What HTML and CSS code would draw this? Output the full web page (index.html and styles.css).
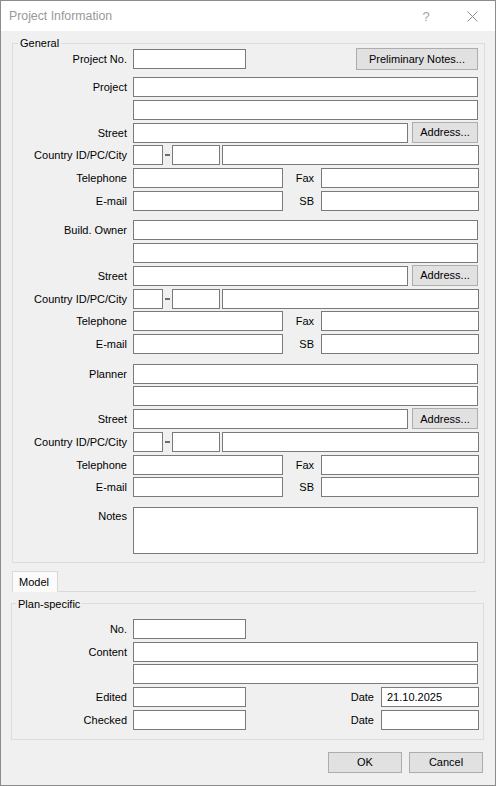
FILE: index.html
```html
<!DOCTYPE html>
<html lang="en">

<head>
    <meta charset="UTF-8">
    <meta name="viewport" content="width=device-width, initial-scale=1.0">
    <title>Project Information</title>
    <link rel="stylesheet" href="styles.css">
</head>

<body>
    <div class="dialog">
        <div class="titlebar">
            <span class="title">Project Information</span>
            <span class="tbtn help">?</span>
            <span class="tbtn close">
                <svg width="11" height="11" viewBox="0 0 11 11">
                    <path d="M0.5 0.5 L10.5 10.5 M10.5 0.5 L0.5 10.5" stroke="#8f8f8f" stroke-width="1" fill="none" />
                </svg>
            </span>
        </div>

        <div class="client">
            <fieldset class="group general">
                <legend>General</legend>
                <div class="rows">
                    <div class="row first">
                        <label class="lbl" for="projno">Project No.</label>
                        <input type="text" id="projno" class="short">
                        <button class="btn prelim">Preliminary Notes...</button>
                    </div>

                    <!-- project -->
                    <div class="row section full">
                        <label class="lbl">Project</label>
                        <input type="text" class="grow">
                    </div>
                    <div class="row full">
                        <span class="lbl"></span>
                        <input type="text" class="grow">
                    </div>
                    <div class="row full">
                        <label class="lbl">Street</label>
                        <input type="text" class="grow">
                        <button class="btn addr">Address...</button>
                    </div>
                    <div class="row">
                        <label class="lbl">Country ID/PC/City</label>
                        <input type="text" class="cid"><span class="dash"></span><input type="text" class="pc"><input type="text" class="grow city">
                    </div>
                    <div class="row">
                        <label class="lbl">Telephone</label>
                        <input type="text" class="phone">
                        <label class="lbl2">Fax</label>
                        <input type="text" class="grow">
                    </div>
                    <div class="row">
                        <label class="lbl">E-mail</label>
                        <input type="text" class="phone">
                        <label class="lbl2">SB</label>
                        <input type="text" class="grow">
                    </div>

                    <!-- building owner -->
                    <div class="row section full">
                        <label class="lbl">Build. Owner</label>
                        <input type="text" class="grow">
                    </div>
                    <div class="row full">
                        <span class="lbl"></span>
                        <input type="text" class="grow">
                    </div>
                    <div class="row full">
                        <label class="lbl">Street</label>
                        <input type="text" class="grow">
                        <button class="btn addr">Address...</button>
                    </div>
                    <div class="row">
                        <label class="lbl">Country ID/PC/City</label>
                        <input type="text" class="cid"><span class="dash"></span><input type="text" class="pc"><input type="text" class="grow city">
                    </div>
                    <div class="row">
                        <label class="lbl">Telephone</label>
                        <input type="text" class="phone">
                        <label class="lbl2">Fax</label>
                        <input type="text" class="grow">
                    </div>
                    <div class="row">
                        <label class="lbl">E-mail</label>
                        <input type="text" class="phone">
                        <label class="lbl2">SB</label>
                        <input type="text" class="grow">
                    </div>

                    <!-- planner -->
                    <div class="row section full">
                        <label class="lbl">Planner</label>
                        <input type="text" class="grow">
                    </div>
                    <div class="row full">
                        <span class="lbl"></span>
                        <input type="text" class="grow">
                    </div>
                    <div class="row full">
                        <label class="lbl">Street</label>
                        <input type="text" class="grow">
                        <button class="btn addr">Address...</button>
                    </div>
                    <div class="row">
                        <label class="lbl">Country ID/PC/City</label>
                        <input type="text" class="cid"><span class="dash"></span><input type="text" class="pc"><input type="text" class="grow city">
                    </div>
                    <div class="row">
                        <label class="lbl">Telephone</label>
                        <input type="text" class="phone">
                        <label class="lbl2">Fax</label>
                        <input type="text" class="grow">
                    </div>
                    <div class="row">
                        <label class="lbl">E-mail</label>
                        <input type="text" class="phone">
                        <label class="lbl2">SB</label>
                        <input type="text" class="grow">
                    </div>

                    <div class="row section full notes">
                        <label class="lbl">Notes</label>
                        <textarea class="grow"></textarea>
                    </div>
                </div>
            </fieldset>

            <div class="tabs">
                <span class="tab">Model</span>
                <span class="tabline"></span>
            </div>

            <fieldset class="group plan">
                <legend>Plan-specific</legend>
                <div class="rows">
                    <div class="row">
                        <label class="lbl">No.</label>
                        <input type="text" class="short">
                    </div>
                    <div class="row">
                        <label class="lbl">Content</label>
                        <input type="text" class="grow">
                    </div>
                    <div class="row">
                        <span class="lbl"></span>
                        <input type="text" class="grow">
                    </div>
                    <div class="row">
                        <label class="lbl">Edited</label>
                        <input type="text" class="short">
                        <label class="date-l">Date</label>
                        <input type="text" class="date" value="21.10.2025">
                    </div>
                    <div class="row">
                        <label class="lbl">Checked</label>
                        <input type="text" class="short">
                        <label class="date-l">Date</label>
                        <input type="text" class="date">
                    </div>
                </div>
            </fieldset>

            <div class="footer">
                <button class="btn dlg">OK</button>
                <button class="btn dlg">Cancel</button>
            </div>
        </div>
    </div>
</body>

</html>
```

FILE: styles.css
```css
* {
    box-sizing: border-box;
}

body {
    margin: 0;
    background-color: #f0f0f0;
    font-family: "Liberation Sans", Arial, sans-serif;
    font-size: 11px;
    color: #000;
}

.dialog {
    width: 496px;
    height: 786px;
    border: 1px solid #8c8c8c;
    background-color: #f0f0f0;
    display: flex;
    flex-direction: column;
}

/* title bar */
.titlebar {
    height: 30px;
    flex: none;
    background-color: #fff;
    display: flex;
    align-items: center;
}

.title {
    flex: 1;
    padding-left: 8px;
    font-size: 12.3px;
    color: #999;
}

.tbtn {
    width: 46px;
    height: 30px;
    display: flex;
    align-items: center;
    justify-content: center;
}

.help {
    font-size: 13px;
    color: #a3a3a3;
}

.close svg {
    display: block;
}

/* dialog body */
.client {
    flex: 1;
    padding: 6px 10px 0 11px;
    display: flex;
    flex-direction: column;
}

.group {
    margin: 0;
    padding: 0 5px 8px 0;
    border: 1px solid #dcdcdc;
    min-width: 0;
}

.group legend {
    margin-left: 5px;
    padding: 0 2px;
    line-height: 12px;
}

.rows {
    display: flex;
    flex-direction: column;
    gap: 2.75px;
}

.row {
    display: flex;
    align-items: center;
    height: 20px;
}

.row.first + .row {
    margin-top: 5.25px;
}

.row.section {
    margin-top: 6.83px;
}

.row.full {
    margin-right: 1px;
}

.lbl {
    flex: none;
    width: 120px;
    padding-right: 6px;
    text-align: right;
    white-space: nowrap;
}

.lbl2 {
    flex: none;
    width: 38px;
    padding-right: 7px;
    text-align: right;
}

input[type="text"],
textarea {
    height: 20px;
    margin: 0;
    padding: 0 4px;
    border: 1px solid #7a7a7a;
    border-radius: 0;
    background: #fff;
    font: inherit;
    color: #000;
    outline: none;
}

.row .grow {
    flex: 1 1 0;
    min-width: 0;
}

.row .short {
    width: 113px;
    flex: none;
}

.row .phone {
    width: 150px;
    flex: none;
}

.row .cid {
    width: 30px;
    flex: none;
}

.row .pc {
    width: 48px;
    flex: none;
}

.row .city {
    margin-left: 2px;
}

.dash {
    flex: none;
    width: 5px;
    height: 2px;
    margin: 0 2px;
    background-color: #6e6e6e;
}

.notes {
    height: 47px;
    align-items: flex-start;
}

.notes .lbl {
    padding-top: 3px;
}

.row textarea {
    height: 47px;
    resize: none;
}

/* buttons */
.btn {
    margin: 0;
    padding: 0;
    background-color: #e1e1e1;
    border: 1px solid #adadad;
    border-radius: 0;
    font: inherit;
    color: #000;
}

.prelim {
    flex: none;
    width: 122px;
    height: 22px;
    margin-left: auto;
    margin-right: 1px;
}

.addr {
    flex: none;
    width: 66px;
    height: 21px;
    margin-left: 4px;
    align-self: flex-start;
    margin-top: -1px;
}

/* tab strip */
.tabs {
    display: flex;
    height: 21px;
    margin: 8px 9px 0 0;
}

.tab {
    width: 46px;
    height: 21px;
    padding-left: 6px;
    line-height: 20px;
    border: 1px solid #d9d9d9;
    border-bottom: none;
    background-color: #fbfbfb;
}

.tabline {
    flex: 1;
    border-bottom: 1px solid #d9d9d9;
}

.plan {
    margin: 6px 1px 0 -1px;
    padding: 9px 5px 9px 0;
}

.plan legend {
    margin-left: 4px;
}

.plan .lbl {
    width: 121px;
}

.date-l {
    flex: 1;
    padding-right: 7px;
    text-align: right;
}

.row .date {
    width: 98px;
    flex: none;
    margin-right: -1px;
    padding-left: 5px;
}

/* OK / Cancel */
.footer {
    display: flex;
    justify-content: flex-end;
    gap: 7px;
    margin: 12px 2px 0 0;
}

.dlg {
    width: 74px;
    height: 21px;
}
```
